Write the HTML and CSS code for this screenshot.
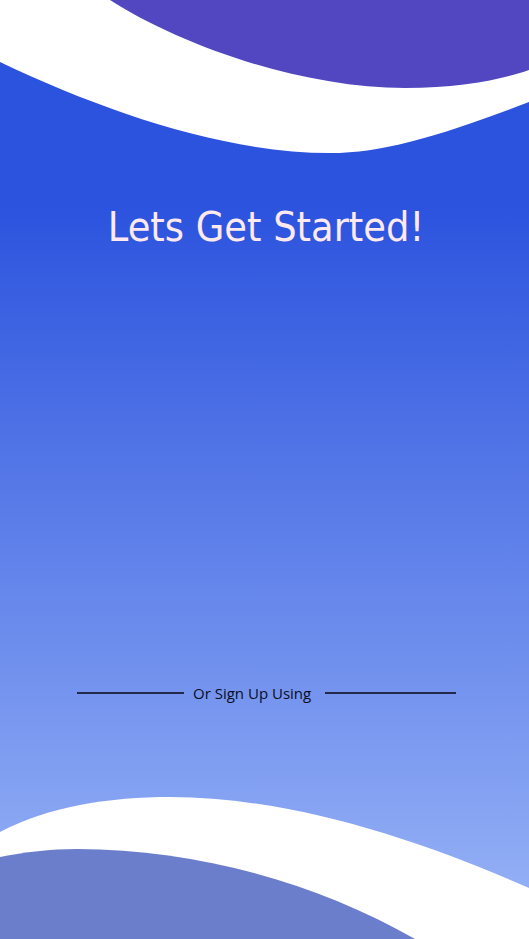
FILE: index.html
```html
<!DOCTYPE html>
<html lang="en">
<head>
<meta charset="utf-8">
<title>Lets Get Started!</title>
<link rel="stylesheet" href="styles.css">
</head>
<body>
<div class="screen">
  <svg class="wave wave-top" viewBox="0 0 529 160" aria-hidden="true">
    <path class="wave-white" d="M0,0 L0,62 C105,112 225,153 330,153 C385,153 445,134 529,102 L529,0 Z"/>
    <path class="wave-violet" d="M110,0 C180,45 300,88 405,88 C460,88 500,80 529,70 L529,0 Z"/>
  </svg>
  <svg class="wave wave-bottom" viewBox="0 789 529 150" aria-hidden="true">
    <path class="wave-white" d="M0,832 C50,806 110,797 170,797 C290,797 420,840 529,888 L529,939 L0,939 Z"/>
    <path class="wave-slate" d="M0,857 C25,852 50,849 77,849 C200,849 320,885 415,939 L0,939 Z"/>
  </svg>

  <main class="content">
    <h1 class="title">Lets Get Started!</h1>
    <div class="divider">
      <span class="divider-line divider-line-left"></span>
      <span class="divider-text">Or Sign Up Using</span>
      <span class="divider-line divider-line-right"></span>
    </div>
  </main>
</div>
</body>
</html>
```

FILE: styles.css
```css
* {
  box-sizing: border-box;
}

html, body {
  margin: 0;
  padding: 0;
}

body {
  background: #ffffff;
}

.screen {
  position: relative;
  width: 529px;
  height: 939px;
  overflow: hidden;
  background: linear-gradient(180deg, #2c53de 0%, #2c53de 22%, #9ab5f7 100%);
}

.wave {
  position: absolute;
  left: 0;
  width: 529px;
  display: block;
}

.wave-top {
  top: 0;
  height: 160px;
}

.wave-bottom {
  bottom: 0;
  height: 150px;
}

.wave-white {
  fill: #ffffff;
}

.wave-violet {
  fill: #5247c1;
}

.wave-slate {
  fill: #6b7ecc;
}

.content {
  position: relative;
  display: flex;
  flex-direction: column;
  padding-top: 202px;
}

.title {
  margin: 0;
  padding-left: 3px;
  text-align: center;
  font-family: "DejaVu Sans Condensed", "DejaVu Sans", sans-serif;
  font-stretch: condensed;
  font-weight: 400;
  font-size: 41px;
  line-height: 50px;
  color: #fde9ee;
}

.divider {
  margin-top: 431px;
  display: flex;
  align-items: center;
  padding-left: 77px;
}

.divider-line {
  height: 2px;
  background: #22294a;
}

.divider-line-left {
  width: 107px;
}

.divider-line-right {
  width: 131px;
}

.divider-text {
  padding: 0 14px 0 9px;
  font-family: "Open Sans", "Noto Sans", sans-serif;
  font-size: 15px;
  font-weight: 500;
  line-height: 20px;
  color: #0a0d1c;
}
```
